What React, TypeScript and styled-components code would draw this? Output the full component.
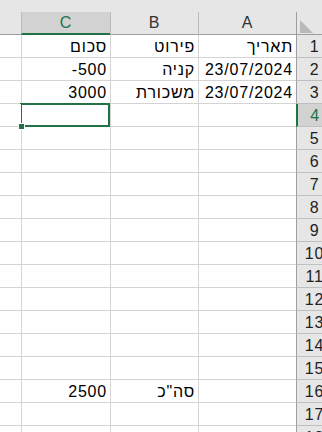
import React from 'react';
import styled, { createGlobalStyle } from 'styled-components';

const green = '#217346';
const headBg = '#e6e6e6';
const headSel = '#d2d2d2';
const gridLine = '#d4d4d4';
const headLine = '#9e9e9e';

const GlobalStyle = createGlobalStyle`
  html, body {
    margin: 0;
    padding: 0;
    background: #fff;
  }
  body {
    font-family: "Liberation Sans", Arial, sans-serif;
  }
`;

const Window = styled.div`
  width: 322px;
  height: 432px;
  overflow: hidden;
  background: #fff;
`;

const TopBand = styled.div`
  height: 12px;
  background: ${headBg};
`;

// rtl grid: row headers on the right, then A, B, C and a cut-off column
const Grid = styled.div`
  width: 332px;
  display: grid;
  direction: rtl;
  grid-template-columns: 36px 98px 88px 89px 21px;
  grid-auto-rows: 23px;
  font-size: 16px;
  letter-spacing: 0.8px;
  color: #000;
`;

const Corner = styled.div`
  box-sizing: border-box;
  background: ${headBg};
  border-left: 1px solid ${headLine};
  border-bottom: 1px solid ${headLine};
  display: flex;
  align-items: flex-end;
  justify-content: flex-end;
  padding: 0 0 1px 3px;
`;

const ColHeader = styled.div<{ $selected?: boolean; $edge?: boolean }>`
  box-sizing: border-box;
  background: ${({ $selected }) => ($selected ? headSel : headBg)};
  color: ${({ $selected }) => ($selected ? green : '#333')};
  border-left: ${({ $edge }) => ($edge ? 'none' : '1px solid #bdbdbd')};
  border-bottom: ${({ $selected }) => ($selected ? `2px solid ${green}` : `1px solid ${headLine}`)};
  text-align: center;
  line-height: 22px;
`;

const RowHeader = styled.div<{ $selected?: boolean }>`
  box-sizing: border-box;
  background: ${({ $selected }) => ($selected ? headSel : headBg)};
  color: ${({ $selected }) => ($selected ? green : '#222')};
  border-left: ${({ $selected }) => ($selected ? `2px solid ${green}` : `1px solid ${headLine}`)};
  border-bottom: 1px solid #bfbfbf;
  text-align: center;
  line-height: 23px;
`;

const Cell = styled.div<{ $selected?: boolean; $edge?: boolean }>`
  box-sizing: border-box;
  position: relative;
  background: #fff;
  border-left: ${({ $edge }) => ($edge ? 'none' : `1px solid ${gridLine}`)};
  border-bottom: 1px solid ${gridLine};
  padding: 0 3px;
  text-align: right;
  line-height: 23px;
  white-space: nowrap;

  ${({ $selected }) =>
    $selected &&
    `
    &::after {
      content: '';
      position: absolute;
      top: -1px;
      left: -2px;
      right: 0;
      bottom: -1px;
      border: 2px solid ${green};
      box-sizing: border-box;
    }
  `}
`;

const FillHandle = styled.span`
  position: absolute;
  left: -4px;
  top: 19px;
  width: 5px;
  height: 5px;
  background: ${green};
  border: 1px solid #fff;
  z-index: 2;
`;

const Num = styled.span`
  direction: ltr;
  unicode-bidi: isolate;
`;

type Row = { A?: string; B?: string; C?: string };

const data: Record<number, Row> = {
  1: { A: 'תאריך', B: 'פירוט', C: 'סכום' },
  2: { A: '23/07/2024', B: 'קניה', C: '-500' },
  3: { A: '23/07/2024', B: 'משכורת', C: '3000' },
  16: { B: 'סה"כ', C: '2500' },
};

const selRow = 4;
const cols: (keyof Row)[] = ['A', 'B', 'C'];

const isNumeric = (v: string) => /^[-\d/.,]+$/.test(v);

const Value = ({ v }: { v?: string }) => {
  if (!v) return null;
  return isNumeric(v) ? <Num>{v}</Num> : <>{v}</>;
};

const App = () => {
  const rows = Array.from({ length: 18 }, (_, i) => i + 1);

  return (
    <Window>
      <GlobalStyle />
      <TopBand />
      <Grid>
        <Corner>
          <svg width="13" height="13" viewBox="0 0 13 13">
            <polygon points="0,0 0,13 13,13" fill="#b9b9b9" />
          </svg>
        </Corner>
        <ColHeader>A</ColHeader>
        <ColHeader>B</ColHeader>
        <ColHeader $selected>C</ColHeader>
        <ColHeader $edge />

        {rows.map((r) => (
          <React.Fragment key={r}>
            <RowHeader $selected={r === selRow}>{r}</RowHeader>
            {cols.map((c) => {
              const sel = r === selRow && c === 'C';
              return (
                <Cell key={c} $selected={sel}>
                  <Value v={data[r]?.[c]} />
                  {sel && <FillHandle />}
                </Cell>
              );
            })}
            <Cell $edge />
          </React.Fragment>
        ))}
      </Grid>
    </Window>
  );
};

export default App;
